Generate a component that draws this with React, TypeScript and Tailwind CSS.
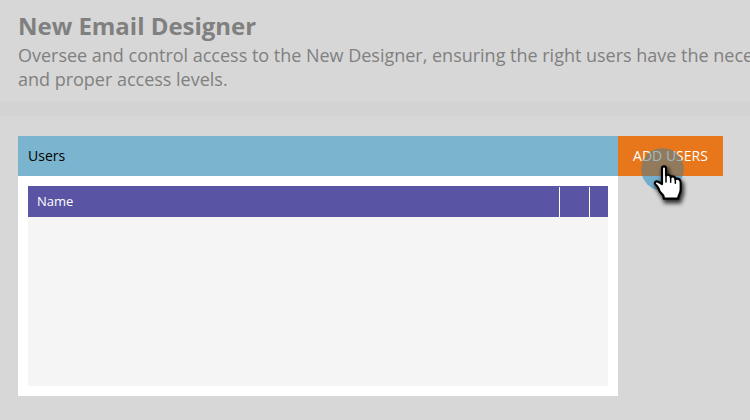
const handPath =
  "M156 174 V127 Q156 121 162 121 Q168 121 168 127 V149 Q171 145 177 147 Q182 148 182 154 Q185 150 191 152 Q196 153 196 160 Q200 156 206 159 Q212 162 212 169 V190 Q212 197 209 203 L205 213 V218 H161 V213 Q160 207 154 202 Q148 197 146 188 Q144 183 138 177 Q132 172 136 168 Q140 164 146 168 Z";

function ClickCursor() {
  return (
    <svg className="absolute left-[20px] top-[8px]" width="55" height="64" viewBox="84 54 165 192" fill="none">
      <defs>
        <filter id="soft" x="-30%" y="-30%" width="170%" height="170%">
          <feGaussianBlur stdDeviation="6" />
        </filter>
        <linearGradient id="halo" gradientUnits="userSpaceOnUse" x1="0" y1="66" x2="0" y2="194">
          <stop offset="0.656" stopColor="#507d91" />
          <stop offset="0.656" stopColor="#288cc3" />
        </linearGradient>
      </defs>
      <circle cx="157.5" cy="130" r="64" fill="url(#halo)" fillOpacity="0.56" />
      <path d={handPath} transform="translate(5 9)" fill="#000" stroke="#000" strokeWidth="10" opacity="0.8" filter="url(#soft)" />
      <path d={handPath} fill="#fff" stroke="#000" strokeWidth="6.5" strokeLinejoin="round" />
      <path d="M168 149V168M182 154V169M196 160V172" stroke="#000" strokeWidth="4.5" strokeLinecap="round" />
    </svg>
  );
}

export default function App() {
  return (
    <div className="h-[420px] w-[750px] overflow-hidden bg-[#d7d7d7] font-['Open_Sans',sans-serif]">
      <header className="h-[101px] pl-[18px] pt-[9px] text-[#808080]">
        <h1 className="pb-px text-2xl font-bold leading-[33px] tracking-[-0.02px]">New Email Designer</h1>
        <p className="whitespace-nowrap text-lg leading-6 tracking-[-0.01px]">
          Oversee and control access to the New Designer, ensuring the right users have the necessary
          <br />
          and proper access levels.
        </p>
      </header>
      <div className="h-[15px] bg-[#d3d3d3]" />
      <main className="mt-5 flex items-start pl-[18px]">
        <section className="h-[260px] w-[600px] bg-white">
          <h2 className="h-10 bg-[#7ab4ce] pl-[10px] text-sm leading-10 text-black">Users</h2>
          <div className="m-[10px] h-[200px] bg-[#f5f5f5]">
            <div className="flex h-[31px] bg-[#5a54a4] pt-px text-[13px] font-medium leading-[28px] text-white">
              <div className="w-[531px] pl-[9px]">Name</div>
              <div className="w-[30px] border-l border-white" />
              <div className="w-[19px] border-l border-white" />
            </div>
          </div>
        </section>
        <div className="relative">
          <button className="h-10 w-[105px] bg-[#e8761a] text-center text-sm leading-10 text-white">ADD USERS</button>
          <ClickCursor />
        </div>
      </main>
    </div>
  );
}
